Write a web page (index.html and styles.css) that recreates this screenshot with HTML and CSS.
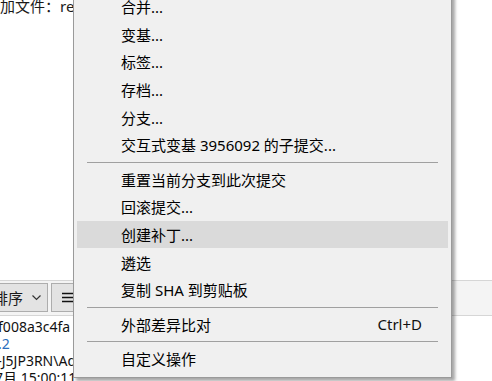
FILE: index.html
```html
<!DOCTYPE html>
<html lang="zh">
<head>
<meta charset="utf-8">
<link rel="stylesheet" href="styles.css">
</head>
<body>
<div class="app">
  <div class="top">
    <div class="status">添加文件：readme.md</div>
  </div>
  <div class="toolbar">
    <div class="btn sort">
      <span>排序</span>
      <svg class="chev" width="9" height="6" viewBox="0 0 9 6"><polyline points="0.5,0.5 4.5,4.5 8.5,0.5" fill="none" stroke="#333" stroke-width="1.2"/></svg>
    </div>
    <div class="btn menu-btn">
      <svg width="12" height="11" viewBox="0 0 12 11"><path d="M0 1.5H12M0 5.5H12M0 9.5H12" stroke="#111" stroke-width="1.5"/></svg>
    </div>
  </div>
  <div class="list">
    <div class="row r1">3956092f008a3c4fa</div>
    <div class="row r2">v1.2</div>
    <div class="row r3">DESKTOP-J5JP3RN\Admin</div>
    <div class="row r4">2024年7月 15:00:11</div>
  </div>
</div>

<div class="menu">
  <div class="item">合并...</div>
  <div class="item">变基...</div>
  <div class="item">标签...</div>
  <div class="item">存档...</div>
  <div class="item">分支...</div>
  <div class="item">交互式变基 3956092 的子提交...</div>
  <div class="sep"></div>
  <div class="item">重置当前分支到此次提交</div>
  <div class="item">回滚提交...</div>
  <div class="item active">创建补丁...</div>
  <div class="item">遴选</div>
  <div class="item">复制 SHA 到剪贴板</div>
  <div class="sep"></div>
  <div class="item"><span>外部差异比对</span><span class="key">Ctrl+D</span></div>
  <div class="sep"></div>
  <div class="item">自定义操作</div>
</div>
</body>
</html>
```

FILE: styles.css
```css
* { box-sizing: border-box; }
html, body {
  margin: 0;
  padding: 0;
  width: 492px;
  height: 381px;
  overflow: hidden;
  background: #ffffff;
  font-family: "Noto Sans", "Noto Sans CJK SC", sans-serif;
  color: #111;
}
body { position: relative; }

.app {
  display: flex;
  flex-direction: column;
  height: 381px;
  overflow: hidden;
}
.top {
  height: 280px;
  flex-shrink: 0;
  overflow: hidden;
}
.status {
  font-size: 15px;
  line-height: 18px;
  margin-top: -3px;
  margin-left: -15px;
  white-space: nowrap;
  color: #1a1a1a;
}

.toolbar {
  height: 36px;
  flex-shrink: 0;
  border-top: 1px solid #d6d6d6;
  border-bottom: 1px solid #d6d6d6;
  background: #f4f4f4;
  display: flex;
  align-items: flex-start;
  padding-top: 2px;
  gap: 3px;
}
.btn {
  height: 29px;
  background: #e3e3e3;
  border: 1px solid #adadad;
  display: flex;
  align-items: center;
}
.sort {
  width: 57px;
  margin-left: -9px;
  padding-left: 1px;
  font-size: 15px;
  white-space: nowrap;
  gap: 9px;
  color: #1a1a1a;
}
.sort span { line-height: 18px; }
.chev { margin-top: 1px; }
.menu-btn {
  width: 60px;
  padding-left: 10px;
}

.list {
  flex: 1;
  min-height: 0;
  overflow: hidden;
  padding-top: 2px;
  font-size: 14px;
  line-height: 17px;
  white-space: nowrap;
}
.r1 { margin-left: -58px; }
.r2 { margin-left: -17px; color: #2a6ebd; }
.r3 { margin-left: -64px; }
.r4 { margin-left: -51px; }

.menu {
  position: absolute;
  left: 73px;
  top: -11px;
  width: 379px;
  background: #f0f0f0;
  border: 1px solid #9a9a9a;
  box-shadow: 3px 3px 3px rgba(0, 0, 0, 0.35);
  padding: 3px 0 4px 0;
  font-size: 15px;
  color: #000;
}
.item {
  height: 27.6px;
  margin: 0 3px;
  padding: 0 26px 0 44px;
  display: flex;
  align-items: center;
  justify-content: space-between;
  white-space: nowrap;
}
.item.active { background: #dadada; }
.key { color: #111; }
.sep {
  height: 1px;
  background: #a0a0a0;
  margin: 3px 13px;
}
```
